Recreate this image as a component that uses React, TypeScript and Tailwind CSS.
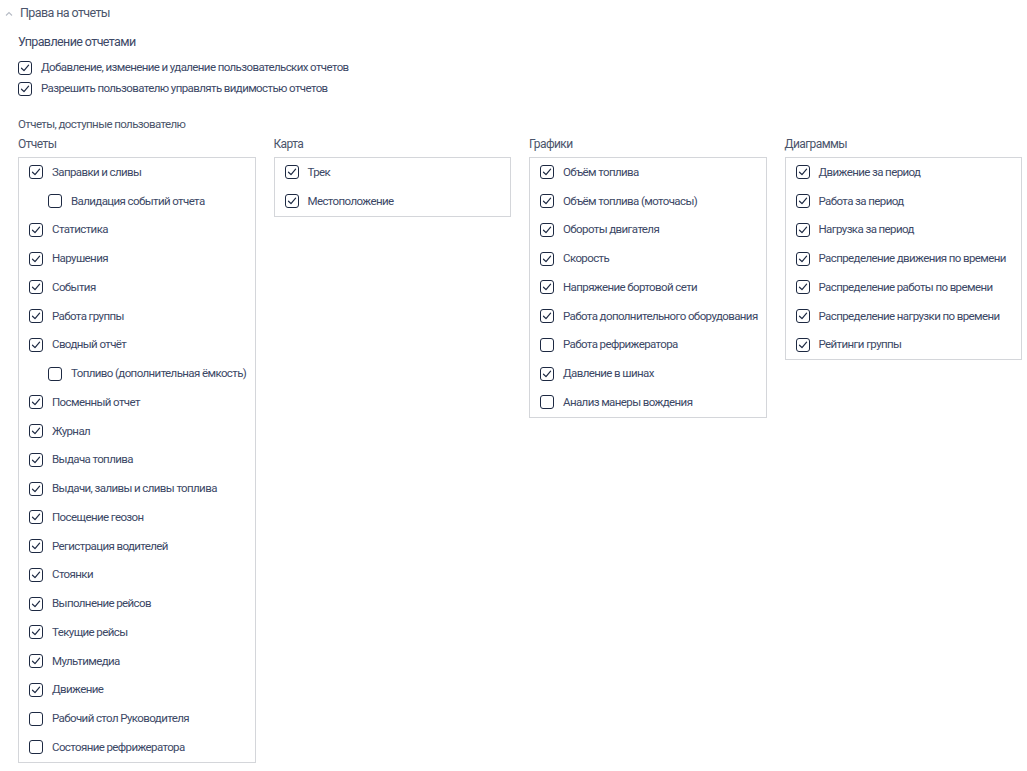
import React from 'react';

type Item = { label: string; checked: boolean; nested?: boolean };

const reports: Item[] = [
  { label: 'Заправки и сливы', checked: true },
  { label: 'Валидация событий отчета', checked: false, nested: true },
  { label: 'Статистика', checked: true },
  { label: 'Нарушения', checked: true },
  { label: 'События', checked: true },
  { label: 'Работа группы', checked: true },
  { label: 'Сводный отчёт', checked: true },
  { label: 'Топливо (дополнительная ёмкость)', checked: false, nested: true },
  { label: 'Посменный отчет', checked: true },
  { label: 'Журнал', checked: true },
  { label: 'Выдача топлива', checked: true },
  { label: 'Выдачи, заливы и сливы топлива', checked: true },
  { label: 'Посещение геозон', checked: true },
  { label: 'Регистрация водителей', checked: true },
  { label: 'Стоянки', checked: true },
  { label: 'Выполнение рейсов', checked: true },
  { label: 'Текущие рейсы', checked: true },
  { label: 'Мультимедиа', checked: true },
  { label: 'Движение', checked: true },
  { label: 'Рабочий стол Руководителя', checked: false },
  { label: 'Состояние рефрижератора', checked: false },
];

const map: Item[] = [
  { label: 'Трек', checked: true },
  { label: 'Местоположение', checked: true },
];

const charts: Item[] = [
  { label: 'Объём топлива', checked: true },
  { label: 'Объём топлива (моточасы)', checked: true },
  { label: 'Обороты двигателя', checked: true },
  { label: 'Скорость', checked: true },
  { label: 'Напряжение бортовой сети', checked: true },
  { label: 'Работа дополнительного оборудования', checked: true },
  { label: 'Работа рефрижератора', checked: false },
  { label: 'Давление в шинах', checked: true },
  { label: 'Анализ манеры вождения', checked: false },
];

const diagrams: Item[] = [
  { label: 'Движение за период', checked: true },
  { label: 'Работа за период', checked: true },
  { label: 'Нагрузка за период', checked: true },
  { label: 'Распределение движения по времени', checked: true },
  { label: 'Распределение работы по времени', checked: true },
  { label: 'Распределение нагрузки по времени', checked: true },
  { label: 'Рейтинги группы', checked: true },
];

const Checkbox: React.FC<{ checked: boolean }> = ({ checked }) => (
  <span className="flex h-[14px] w-[14px] shrink-0 items-center justify-center rounded-[3px] border-[1.5px] border-[#1d2942] bg-white">
    {checked && (
      <svg width="10" height="10" viewBox="0 0 10 10" fill="none">
        <path d="M1.5 5.2 L4 7.6 L8.6 2.2" stroke="#1d2942" strokeWidth="1.2" strokeLinecap="round" strokeLinejoin="round" />
      </svg>
    )}
  </span>
);

const Group: React.FC<{ title: string; items: Item[] }> = ({ title, items }) => (
  <div className="flex flex-col">
    <div className="mb-[5px] h-[15px] text-[12px] leading-[15px] text-[#4b556b]">{title}</div>
    <div className="border border-[#d4d6da]">
      {items.map((it) => (
        <div
          key={it.label}
          className={`flex h-[28.75px] items-center gap-[9px] ${it.nested ? 'pl-[29px]' : 'pl-[10px]'}`}
        >
          <Checkbox checked={it.checked} />
          <span className="whitespace-nowrap text-[11.5px] text-[#3c4866]">{it.label}</span>
        </div>
      ))}
    </div>
  </div>
);

const App: React.FC = () => {
  return (
    <div
      className="min-h-screen bg-white pl-[18px] pr-[5px] tracking-[-0.6px]"
      style={{ fontFamily: 'Roboto, "Noto Sans", sans-serif' }}
    >
      {/* Section header */}
      <div className="-ml-[13px] flex h-[27px] items-center gap-[7px]">
        <svg width="8" height="6" viewBox="0 0 8 6" fill="none">
          <path d="M1 4.5 L4 1.5 L7 4.5" stroke="#b7bcc6" strokeWidth="1.1" />
        </svg>
        <span className="text-[12.5px] text-[#4b556b]">Права на отчеты</span>
      </div>

      <div className="mt-[7px] text-[12.5px] leading-[16px] text-[#3c4866]">Управление отчетами</div>

      <div className="mt-[11px] flex flex-col gap-[7px]">
        <label className="flex h-[14px] items-center gap-[9px]">
          <Checkbox checked />
          <span className="text-[11.5px] text-[#3c4866]">Добавление, изменение и удаление пользовательских отчетов</span>
        </label>
        <label className="flex h-[14px] items-center gap-[9px]">
          <Checkbox checked />
          <span className="text-[11.5px] text-[#3c4866]">Разрешить пользователю управлять видимостью отчетов</span>
        </label>
      </div>

      <div className="mt-[21px] text-[11.5px] leading-[15px] text-[#4b556b]">Отчеты, доступные пользователю</div>

      <div className="mt-[5px] grid grid-cols-4 items-start gap-x-[18px]">
        <Group title="Отчеты" items={reports} />
        <Group title="Карта" items={map} />
        <Group title="Графики" items={charts} />
        <Group title="Диаграммы" items={diagrams} />
      </div>
    </div>
  );
};

export default App;
